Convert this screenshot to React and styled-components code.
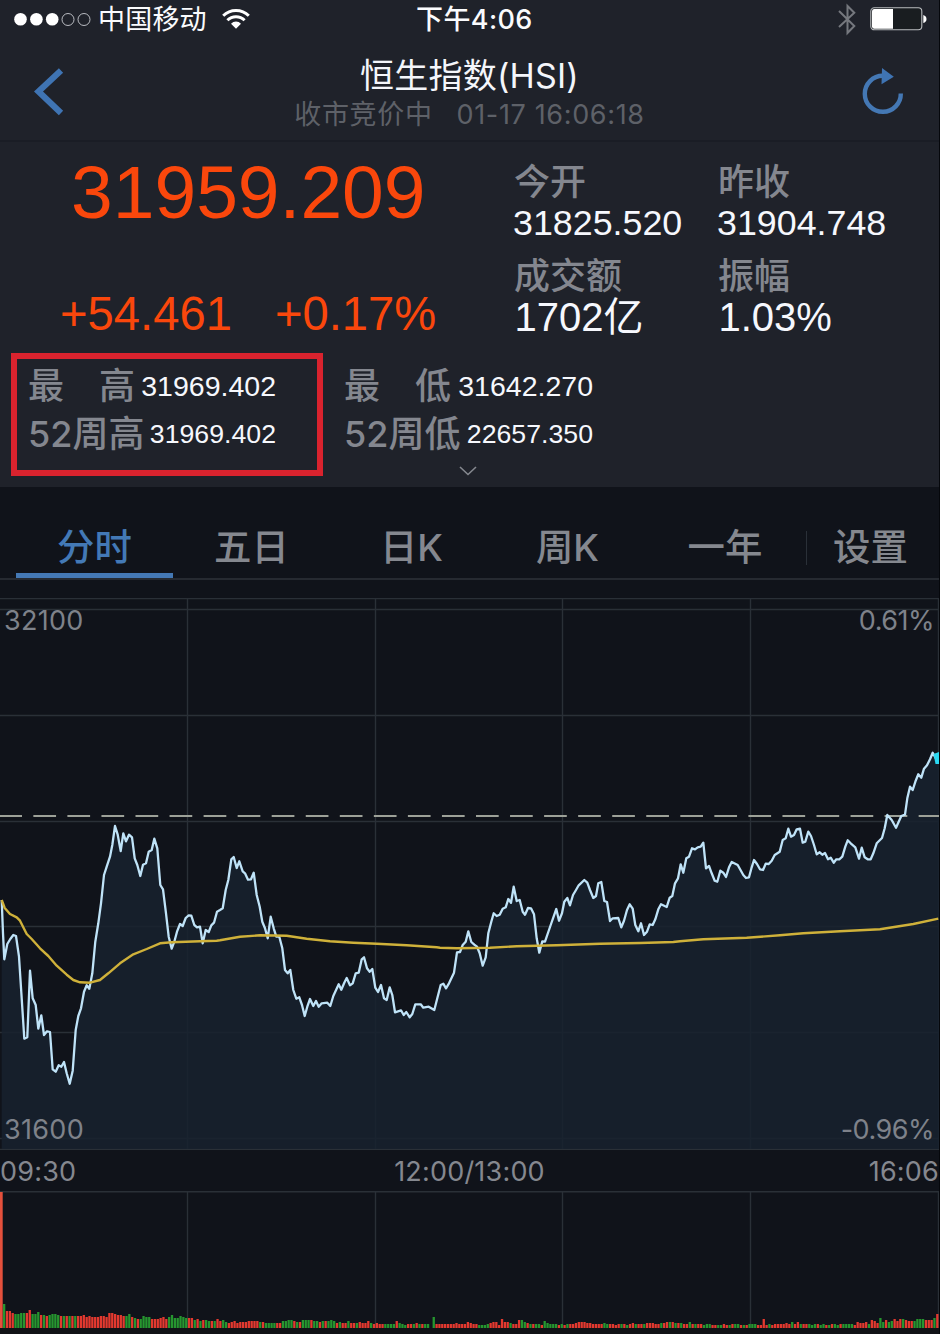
import React from "react";
import styled, { createGlobalStyle } from "styled-components";

const UI = `Inter, "Noto Sans CJK SC", sans-serif`;
const NUM = `"Liberation Sans", "Noto Sans CJK SC", sans-serif`;

const GlobalStyle = createGlobalStyle`
  body { margin: 0; background: #10131a; }
  * { box-sizing: border-box; }
  svg { display: block; }
`;

const Page = styled.div`
  width: 940px;
  height: 1334px;
  overflow: hidden;
  background: #10131a;
  border-right: 1px solid #05070b;
  font-family: ${UI};
  white-space: nowrap;
`;

const Top = styled.div`
  background: #1f222a;
  height: 487px;
`;

const StatusBar = styled.div`
  height: 39px;
  display: grid;
  grid-template-columns: 416px 1fr auto;
  align-items: center;
  padding-right: 12px;
  color: #fafbfd;
`;

const Carrier = styled.div`
  display: flex;
  align-items: center;
  padding-left: 14px;
  font-size: 27px;
  line-height: 39px;
  span { margin: 0 15px 0 6px; letter-spacing: 0.2px; }
`;

const Clock = styled.div`
  font-size: 27px;
  font-weight: 500;
  line-height: 39px;
  letter-spacing: 0.4px;
`;

const StatusIcons = styled.div`
  display: flex;
  align-items: center;
  gap: 14px;
`;

const NavBar = styled.header`
  height: 103px;
  display: grid;
  grid-template-columns: 200px 1fr 200px;
  border-bottom: 2px solid #1a1d25;
`;

const NavSide = styled.div`
  padding: ${(p) => p.$pad};
  display: flex;
  justify-content: ${(p) => (p.$end ? "flex-end" : "flex-start")};
  align-items: flex-start;
`;

const TitleBlock = styled.div`
  display: flex;
  flex-direction: column;
  align-items: center;
  padding-top: 16px;
`;

const Title = styled.div`
  font-size: 34px;
  line-height: 41px;
  letter-spacing: 0.2px;
  color: #f4f6fb;
`;

const Subtitle = styled.div`
  display: flex;
  gap: 24px;
  font-size: 27px;
  line-height: 37px;
  letter-spacing: 0.65px;
  color: #5e6168;
`;

const Quote = styled.section`
  height: 205px;
  display: grid;
  grid-template-columns: 513px 204px 1fr;
`;

const PriceBlock = styled.div`
  font-family: ${NUM};
  color: #fa470c;
`;

const Price = styled.div`
  padding: 12px 0 0 71px;
  font-size: 75px;
  line-height: 76px;
`;

const Change = styled.div`
  display: flex;
  gap: 43px;
  padding: 59px 0 0 60px;
  font-size: 47.2px;
  line-height: 50px;
`;

const Stats = styled.div`
  display: flex;
  flex-direction: column;
  padding-top: 20px;
`;

const StatLabel = styled.div`
  padding-left: 1px;
  font-size: 36px;
  line-height: ${(p) => p.$h || 40}px;
  font-weight: 500;
  color: #84878f;
`;

const StatValue = styled.div`
  font-family: ${NUM};
  font-size: ${(p) => p.$size}px;
  line-height: ${(p) => p.$h}px;
  padding-left: ${(p) => p.$inset || 0}px;
  color: #f6f8fd;
  font-weight: 400;
`;

const Extremes = styled.section`
  display: flex;
  gap: 4px;
  padding: 6px 0 0 11px;
`;

const ExtremeBox = styled.div`
  width: 312px;
  height: 123px;
  padding: 3px 0 0 11px;
  border: 6px solid ${(p) => (p.$marked ? "#d9232e" : "transparent")};
`;

const ExtremeRow = styled.div`
  display: flex;
  width: ${(p) => p.$w}px;
  height: 48px;
  align-items: center;
  justify-content: space-between;
  font-size: 36px;
  line-height: 48px;
  font-weight: 500;
  color: #84878f;
`;

const SpacedLabel = styled.span`
  display: flex;
  width: 107px;
  justify-content: space-between;
`;

const Expand = styled.div`
  display: flex;
  justify-content: center;
  margin-top: -10px;
  padding-right: 3px;
`;

const Tabs = styled.nav`
  height: 93px;
  padding: 23px 0 0 16px;
  display: grid;
  grid-template-columns: 157px 157px 157px 157px 162px 1fr;
  border-bottom: 2px solid #262a31;
`;

const Tab = styled.div`
  height: 68px;
  padding-left: ${(p) => p.$shift || 0}px;
  font-size: 37.4px;
  line-height: 76px;
  font-weight: 500;
  text-align: center;
  color: ${(p) => (p.$active ? "#4379b6" : "#85888f")};
  border-bottom: 5px solid ${(p) => (p.$active ? "#4478b4" : "transparent")};
`;

const SettingsTab = styled(Tab)`
  display: flex;
  height: 76px;
  align-items: center;
  gap: 26px;
  border-bottom: 0;
  &::before {
    content: "";
    width: 1px;
    height: 34px;
    background: #2a3038;
  }
`;

const ChartPanel = styled.section`
  position: relative;
  height: 570px;
  padding-top: 18px;
`;

const AxisLabel = styled.span`
  position: absolute;
  ${(p) => (p.$right ? "right: 5px" : "left: 4px")};
  ${(p) => (p.$bottom ? "bottom: 5px" : "top: 26px")};
  font-size: 27px;
  line-height: 30px;
  letter-spacing: ${(p) => (p.$right ? -0.5 : 0.3)}px;
  color: #7e828a;
`;

const TimeAxis = styled.div`
  height: 41px;
  display: grid;
  grid-template-columns: 1fr auto 1fr;
  font-size: 27px;
  line-height: 43px;
  letter-spacing: 0.2px;
  color: #85888f;
  span:last-child { text-align: right; }
`;

const pts = (ox, oy, s) =>
  s.trim().split(/\s+/).map((p) => {
    const [x, y] = p.split(",").map(Number);
    return [ox + x / 3, oy + y / 3];
  });

const price = [
  ...pts(0, 800, `5,300 9,400 13,478 22,432 31,417 40,405 48,408 57,470 73,716 82,712 90,512 98,595 107,615 115,686 124,646 132,705 141,694 150,696 158,808 167,815 176,796 184,800 192,786 200,820 209,851 218,812 227,690 235,648 243,625 252,575 260,556 268,566 277,520 286,425 295,370 303,310 312,225 320,200 330,170 337,135 345,78 353,104 362,153 370,100 378,124 387,104 396,112 404,175 412,195 421,228 429,194 438,190 446,155 455,150 463,116 472,145 481,255 489,268 498,340 506,410 515,446 523,425 531,395 540,372 548,378 557,354 566,346 574,347 583,375 591,382 600,380 608,430 617,390 626,396 634,376 642,368 651,335`),
  ...pts(220, 820, `0,270 8,265 17,210 25,180 34,118 41,111 50,144 58,124 68,154 75,160 84,179 93,178 101,158 110,225 119,260 127,305 135,325 143,355 152,290 161,325 169,350 178,350 187,385 195,450 203,460 211,450 220,510 229,536 238,532 246,555 254,588 262,560 270,537 280,558 288,543 296,560 305,550 322,548 331,558 340,528 356,493 364,509 373,488 380,474 390,496 398,490 407,460 416,458 425,418 432,412 441,445 449,455 457,447 466,503 474,516 483,495 492,535 500,540 509,502 517,525 525,577 543,571 551,585 559,576 569,592 577,582 586,553 602,553 610,563 626,560 643,570 652,535`),
  ...pts(440, 820, `2,495 10,491 18,505 27,490 42,458 51,397 60,396 68,375 77,365 85,334 94,366 103,374 111,380 119,400 128,437 137,412 145,340 154,305 161,280 170,288 179,284 188,266 197,262 205,237 213,248 221,200 230,243 239,240 248,275 255,284 264,264 273,265 282,283 290,355 298,398 307,364 315,365 332,315 349,267 357,302 366,280 373,245 382,234 390,256 399,225 408,210 416,196 433,180 442,188 450,210 460,234 468,228 475,190 484,186 493,243 501,246 510,303 518,295 535,294 544,322 552,302 561,270 569,253 578,266 586,315 595,334 603,310 612,345 621,335 629,313 638,315 646,298 655,268 663,253 680,261 689,233 697,228 705,190 714,175`),
  ...pts(680, 730, `2,403 10,428 19,385 27,380 36,355 45,358 53,352 62,350 70,338 78,415 87,408 95,430 104,452 112,455 121,422 130,428 138,441 147,412 155,396 173,405 190,435 198,444 207,442 215,412 222,390 231,402 240,418 249,420 257,401 266,402 275,392 284,375 299,365 308,330 317,325 325,296 333,320 342,315 350,298 360,296 368,338 376,335 385,305 393,318 402,345 410,373 419,367 427,374 435,369 444,388 452,383 461,398 469,388 478,388 487,380 496,350 503,331 512,340 526,352 537,386 545,353 554,382 563,388 572,388 580,370 590,340 606,324 614,295 622,255 635,270 648,293 664,258 675,254 682,205 690,170 698,180 707,152 715,133 724,143 732,116 741,106 750,88 758,68 768,86`),
];

const average = [
  ...pts(0, 800, `5,300 14,324 30,342 50,352 60,362 80,402 95,417 120,445 145,468 170,497 200,524 220,540 240,547 270,548 300,540 325,520 360,490 400,463 440,447 480,430 515,427 600,424 650,422`),
  ...pts(220, 820, `0,361 60,350 120,346 200,347 260,356 330,364 400,368 470,371 560,376 650,382`),
  ...pts(440, 820, `0,383 50,385 150,383 230,379 350,376 480,371 600,369 700,366`),
  ...pts(680, 730, `0,634 70,628 200,623 300,616 370,610 480,604 600,598 700,582 775,566`),
];

const toPath = (list) => "M" + list.map(([x, y]) => `${x.toFixed(1)} ${y.toFixed(1)}`).join("L");

const COLUMNS = [187.5, 375.5, 562.5, 750.5];
const ROWS = [609.5, 715.5, 821.5, 926.5, 1032.5, 1138.5];

function PriceChart() {
  const line = toPath(price);
  return (
    <svg width="939" height="552" viewBox="0 598 939 552">
      <g stroke="#2a3037" strokeWidth="1.4">
        <path d="M0 598.5H939M0 1149.5H939M938.5 598V1150" />
        {ROWS.map((y) => <path key={y} d={`M0 ${y}H939`} />)}
        {COLUMNS.map((x) => <path key={x} d={`M${x} 598V1149`} />)}
      </g>
      <path d={`${line}L939 758V1149H1.7Z`} fill="#17222f" fillOpacity="0.86" />
      <path d="M-0.7 816H939" stroke="#9da198" strokeWidth="2" strokeDasharray="22.7 11.35" />
      <path d={line} fill="none" stroke="#bfe3f8" strokeWidth="2.3" strokeLinejoin="round" />
      <path d={toPath(average)} fill="none" stroke="#cfb13a" strokeWidth="2.4" strokeLinejoin="round" />
      <path d="M933.5 754L939 752V764H935.5Z" fill="#2bd9f3" />
    </svg>
  );
}

const VOLUME = [
  ["ohhfeefffi", "grrrggggrr"],
  ["eegddcdeedcccccc", "gggrgrggggrgrgrg"],
  ["ccdbcbbbccbffeddc", "rrrrrrrrrrrrrrrrr"],
  ["ceba99cbb999ab9", "ggrgrggggrrrrrr"],
  ["bdaacbaaa8978877797", "gggggggrrgrgrggrgrr"],
  ["8656756667777665555", "ggrrrrrrrrrrrgrgggg"],
  ["55778876688887767778", "rrggggrgrgggrggrgrgg"],
  ["756557555655754", "grgrrgrrgrrrrgr"],
  ["544444475434445", "rrrggggrgggrrgr"],
  ["44440b44444445444654", "grgg0grrrrrrrrrrrrrr"],
  ["43334566396654488654", "rggggrrrrrrrgrrrggrg"],
  ["44437544434344456665", "rggrgggggrgrgrrrrrrr"],
  ["54444544434443454444", "rrrrrggrrrrgrgrrgrrg"],
  ["55544556665554464444", "rrrrrgrrgrgrgrrgrgrr"],
  ["34433334334443334443", "gggrrggrrgrggrgrgggr"],
  ["3934344445464644", "rrrgrrrrrrrgrrgr"],
  ["44344", "rgggr"],
  ["343344344444365564875a68", "ggrgrggrggggrrrrrgrrrggr"],
  ["6797998777999888ae", "ggrrrgrrrggggrrrgr"],
];

const heights = VOLUME.map((v) => v[0]).join("").split("").map((c) => parseInt(c, 36));
const flags = VOLUME.map((v) => v[1].padEnd(v[0].length, "g").slice(0, v[0].length)).join("");
const STEP = 936 / heights.length;

function VolumeChart() {
  return (
    <svg width="939" height="144" viewBox="0 1190 939 144">
      <g stroke="#2a3037" strokeWidth="1.4">
        <path d="M0 1190.8H939M938.5 1190V1327" />
        {COLUMNS.map((x) => <path key={x} d={`M${x} 1190V1327`} />)}
      </g>
      <rect x="0" y="1191" width="2.7" height="136" fill="#e4503c" />
      {heights.map((h, i) => (
        <rect
          key={i}
          x={3 + i * STEP}
          y={1327 - h}
          width="2.3"
          height={h}
          fill={flags[i] === "g" ? "#26962f" : "#e3392f"}
        />
      ))}
      <rect x="0" y="1327" width="939" height="7" fill="#111216" />
    </svg>
  );
}

const Signal = () => (
  <svg width="78" height="14" viewBox="0 0 78 14">
    {[6.5, 22.4, 38.2].map((x) => <circle key={x} cx={x} cy="6.3" r="6.3" fill="#fff" />)}
    {[54, 70].map((x) => <circle key={x} cx={x} cy="6.5" r="6" fill="none" stroke="#c9ccd1" strokeWidth="0.9" />)}
  </svg>
);

const Wifi = () => (
  <svg width="28" height="24" viewBox="0 0 28 24">
    <g fill="none" stroke="#fff" strokeWidth="3">
      <path d="M1.2 7.7A18.2 18.2 0 0 1 26.8 7.7" />
      <path d="M5.4 12.2A12.2 12.2 0 0 1 22.6 12.2" />
    </g>
    <path d="M9 15.7A7 7 0 0 1 19 15.7L14 20.8Z" fill="#fff" />
  </svg>
);

const Bluetooth = () => (
  <svg width="18" height="34" viewBox="0 0 18 34">
    <path d="M1 8L16.3 23L9.5 30V3L16.3 9.8L1 24" fill="none" stroke="#75787e" strokeWidth="2" />
  </svg>
);

const Battery = () => (
  <svg width="57" height="25" viewBox="0 0 57 25">
    <rect x="0.8" y="0.8" width="51" height="22" rx="3.5" fill="#191d20" stroke="#b9bcbf" strokeWidth="1.1" />
    <path d="M4.3 2H23V21.7H4.3Q2 21.7 2 19.5V4.2Q2 2 4.3 2Z" fill="#fff" />
    <path d="M53.3 8Q56.5 9 56.5 12T53.3 16Z" fill="#fff" />
  </svg>
);

const TABS = [
  { name: "分时" },
  { name: "五日" },
  { name: "日K", shift: 6 },
  { name: "周K", shift: 4 },
  { name: "一年" },
];

function Extreme({ marked, kind, day, year, width }) {
  return (
    <ExtremeBox $marked={marked}>
      <ExtremeRow $w={width}>
        <SpacedLabel><span>最</span><span>{kind}</span></SpacedLabel>
        <StatValue $size={28.5} $h={48}>{day}</StatValue>
      </ExtremeRow>
      <ExtremeRow $w={width}>
        <span>52周{kind}</span>
        <StatValue $size={26.7} $h={48}>{year}</StatValue>
      </ExtremeRow>
    </ExtremeBox>
  );
}

export default function App() {
  return (
    <Page>
      <GlobalStyle />
      <Top>
        <StatusBar>
          <Carrier><Signal /><span>中国移动</span><Wifi /></Carrier>
          <Clock>下午4:06</Clock>
          <StatusIcons><Bluetooth /><Battery /></StatusIcons>
        </StatusBar>
        <NavBar>
          <NavSide $pad="29px 0 0 34px">
            <svg width="30" height="50" viewBox="0 0 30 50">
              <path d="M27 2.5L4.5 23.5L27 45" fill="none" stroke="#3f74b3" strokeWidth="6.2" />
            </svg>
          </NavSide>
          <TitleBlock>
            <Title>恒生指数(HSI)</Title>
            <Subtitle><span>收市竞价中</span><span>01-17 16:06:18</span></Subtitle>
          </TitleBlock>
          <NavSide $end $pad="28px 35px 0 0">
            <svg width="42" height="48" viewBox="862 67 42 48">
              <path d="M900.8 93.5A18 18 0 1 1 882.8 75.8" fill="none" stroke="#4478b4" strokeWidth="4.4" />
              <path d="M882 68L893.8 76.8L881.5 84.3Z" fill="#3f74b3" />
            </svg>
          </NavSide>
        </NavBar>
        <Quote>
          <PriceBlock>
            <Price>31959.209</Price>
            <Change><span>+54.461</span><span>+0.17%</span></Change>
          </PriceBlock>
          <Stats>
            <StatLabel>今开</StatLabel>
            <StatValue $size={35.8} $h={42}>31825.520</StatValue>
            <StatLabel $h={64}>成交额</StatLabel>
            <StatValue $size={40} $h={18} $inset={1.5}>1702亿</StatValue>
          </Stats>
          <Stats>
            <StatLabel>昨收</StatLabel>
            <StatValue $size={35.8} $h={42}>31904.748</StatValue>
            <StatLabel $h={64}>振幅</StatLabel>
            <StatValue $size={40} $h={18} $inset={1.5}>1.03%</StatValue>
          </Stats>
        </Quote>
        <Extremes>
          <Extreme marked kind="高" day="31969.402" year="31969.402" width={248} />
          <Extreme kind="低" day="31642.270" year="22657.350" width={249} />
        </Extremes>
        <Expand>
          <svg width="18" height="10" viewBox="0 0 18 10">
            <path d="M1 1L9 8.5L17 1" fill="none" stroke="#85888f" strokeWidth="1.6" />
          </svg>
        </Expand>
      </Top>
      <Tabs>
        {TABS.map((t, i) => <Tab key={t.name} $active={i === 0} $shift={t.shift}>{t.name}</Tab>)}
        <SettingsTab>设置</SettingsTab>
      </Tabs>
      <ChartPanel>
        <PriceChart />
        <AxisLabel>32100</AxisLabel>
        <AxisLabel $right>0.61%</AxisLabel>
        <AxisLabel $bottom>31600</AxisLabel>
        <AxisLabel $right $bottom>-0.96%</AxisLabel>
      </ChartPanel>
      <TimeAxis><span>09:30</span><span>12:00/13:00</span><span>16:06</span></TimeAxis>
      <VolumeChart />
    </Page>
  );
}
